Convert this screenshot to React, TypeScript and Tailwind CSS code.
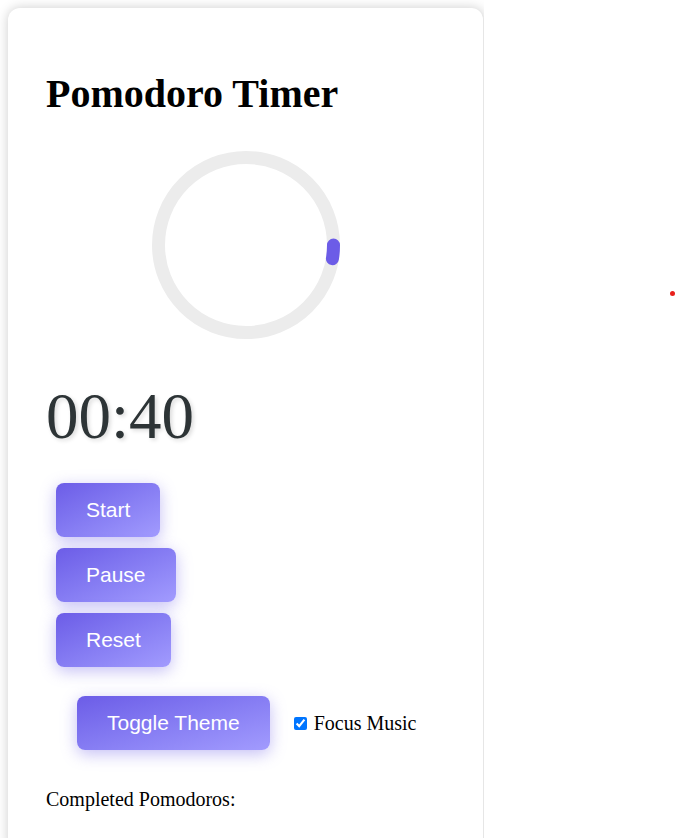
import { useState } from "react";

const serif = "font-['Liberation_Serif','Times_New_Roman',serif]";
const sans = "font-['Liberation_Sans',Arial,sans-serif]";

const btn =
  "rounded-lg bg-gradient-to-br from-[#6c5ce7] to-[#a29bfe] px-[30px] py-[15px] text-[21px] leading-[24px] text-white shadow-[0_4px_16px_rgba(108,92,231,0.4)] " +
  sans;

// progress arc: 0deg (3 o'clock) clockwise a few degrees
function arcPath(cx: number, cy: number, r: number, from: number, to: number) {
  const a0 = (from * Math.PI) / 180;
  const a1 = (to * Math.PI) / 180;
  const x0 = cx + r * Math.cos(a0);
  const y0 = cy + r * Math.sin(a0);
  const x1 = cx + r * Math.cos(a1);
  const y1 = cy + r * Math.sin(a1);
  return `M ${x0} ${y0} A ${r} ${r} 0 0 1 ${x1} ${y1}`;
}

export default function App() {
  const [music, setMusic] = useState(true);

  return (
    <div className="relative min-h-[838px] w-[676px] overflow-hidden bg-white">
      <div className="w-[484px] overflow-hidden pl-2 pt-2">
        <div className="h-[840px] rounded-t-xl border-r border-[#e6e6e6] bg-white px-[38px] pt-[64px] shadow-[0_0_12px_rgba(0,0,0,0.2)]">
          <h1 className={`text-[40px] font-bold leading-[44px] text-black ${serif}`}>Pomodoro Timer</h1>

          <div className="mt-[29px] flex justify-center">
            <svg width="200" height="200" viewBox="0 0 200 200">
              <circle cx="100" cy="100" r="87.5" fill="none" stroke="#ececec" strokeWidth="13" />
              <path
                d={arcPath(100, 100, 87.5, 0, 9)}
                fill="none"
                stroke="#6c5ce7"
                strokeWidth="13"
                strokeLinecap="round"
              />
            </svg>
          </div>

          <div
            className={`mt-[33px] text-[65px] leading-[76px] text-[#2d3436] [text-shadow:2px_2px_4px_rgba(0,0,0,0.15)] ${serif}`}
          >
            00:40
          </div>

          <div className="mt-[29px] ml-[10px] flex flex-col items-start gap-[11px]">
            <button className={btn}>Start</button>
            <button className={btn}>Pause</button>
            <button className={btn}>Reset</button>
          </div>

          <div className="mt-[29px] ml-[31px] flex items-center">
            <button className={btn}>Toggle Theme</button>
            <label className={`ml-[24px] flex items-center text-[20px] text-black ${serif}`}>
              <input
                type="checkbox"
                checked={music}
                onChange={(e) => setMusic(e.target.checked)}
                className="mr-[7px] h-[13px] w-[13px] accent-[#0075ff]"
              />
              Focus Music
            </label>
          </div>

          <p className={`mt-[38px] text-[20px] leading-[23px] text-black ${serif}`}>Completed Pomodoros:</p>
        </div>
      </div>

      {/* stray red dot */}
      <div className="absolute left-[670px] top-[291px] h-[5px] w-[5px] rounded-full bg-[#e8201c]" />
    </div>
  );
}
